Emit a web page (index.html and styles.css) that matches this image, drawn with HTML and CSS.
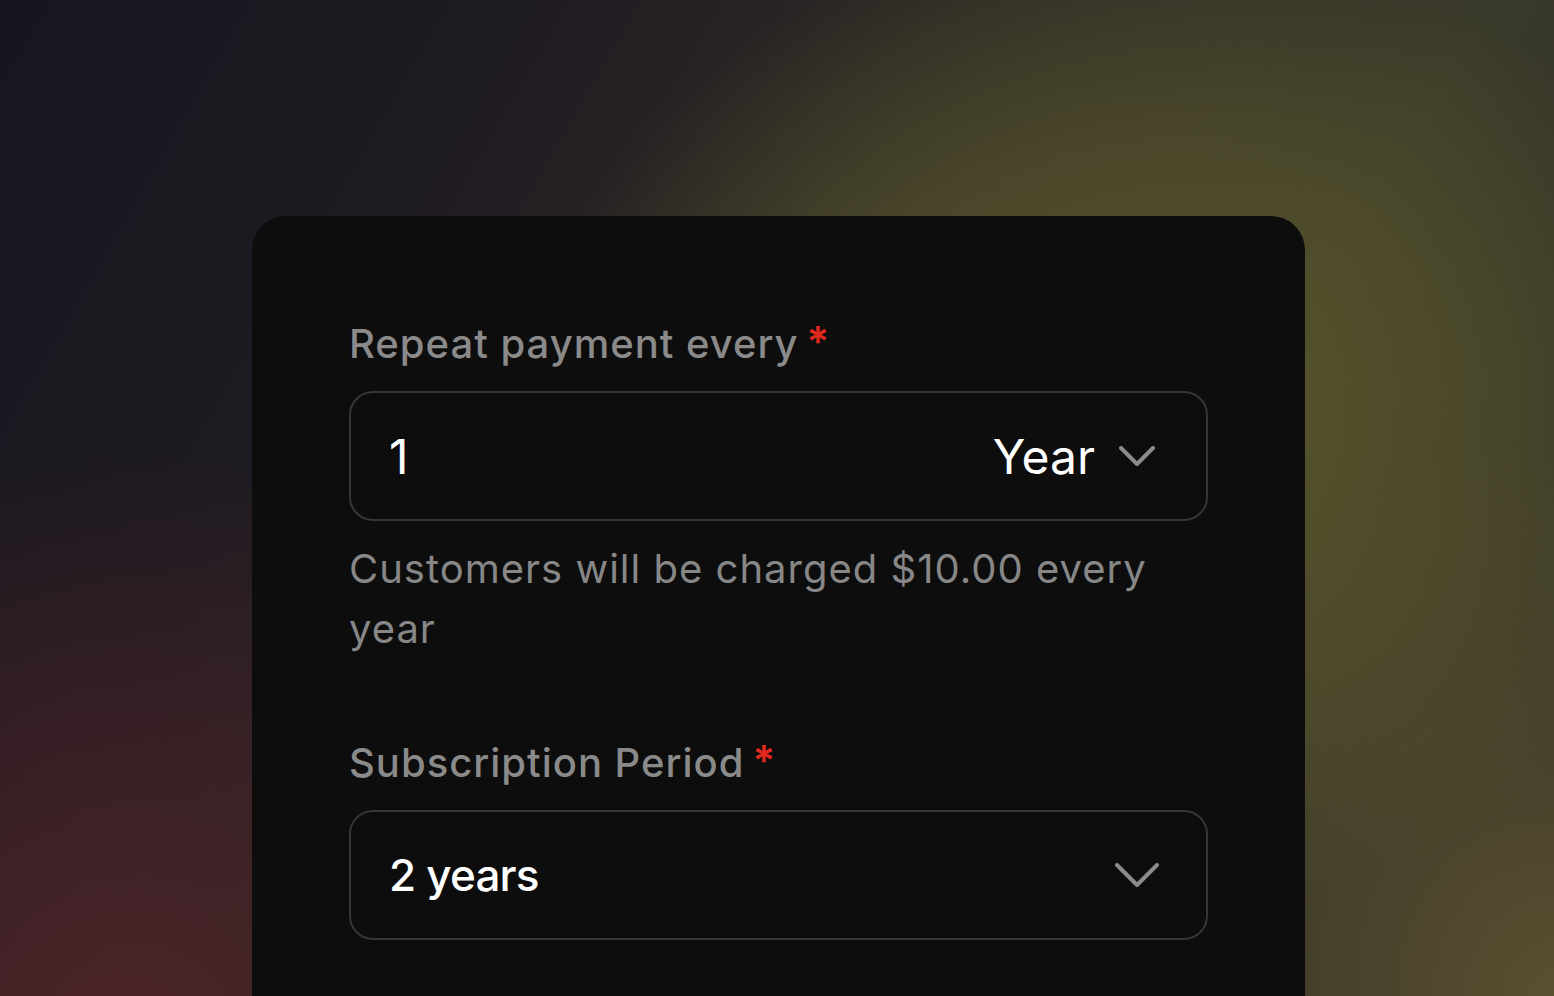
FILE: index.html
```html
<!DOCTYPE html>
<html lang="en">
<head>
<meta charset="utf-8">
<title>Subscription form</title>
<link rel="stylesheet" href="styles.css">
</head>
<body>
<main class="card">
  <section class="field">
    <div class="label">Repeat payment every<span class="req">*</span></div>
    <div class="input">
      <span class="value">1</span>
      <span class="unit">Year
        <svg class="chev chev-sm" viewBox="0 0 36 20" width="36" height="20"><path d="M2 2 L18 18 L34 2" fill="none" stroke="#8b8b8b" stroke-width="4" stroke-linecap="round" stroke-linejoin="round"/></svg>
      </span>
    </div>
    <p class="help">Customers will be charged $10.00 every year</p>
  </section>
  <section class="field field-second">
    <div class="label">Subscription Period<span class="req">*</span></div>
    <div class="input">
      <span class="value strong">2 years</span>
      <svg class="chev chev-lg" viewBox="0 0 44 24" width="44" height="24"><path d="M2 2 L22 22 L42 2" fill="none" stroke="#8b8b8b" stroke-width="4" stroke-linecap="round" stroke-linejoin="round"/></svg>
    </div>
  </section>
</main>
</body>
</html>
```

FILE: styles.css
```css
* { box-sizing: border-box; }
html, body { margin: 0; height: 100%; }
body {
  width: 1554px;
  height: 996px;
  overflow: hidden;
  font-family: "Inter", "Noto Sans", sans-serif;
  padding: 216px 0 0 252px;
  background:
    radial-gradient(ellipse 760px 620px at 1130px 420px, rgba(92,88,44,0.95) 0%, rgba(92,88,44,0.55) 45%, rgba(92,88,44,0) 80%),
    radial-gradient(ellipse 700px 700px at 120px 1050px, rgba(76,36,40,1) 0%, rgba(70,34,38,0.6) 45%, rgba(70,34,38,0) 85%),
    radial-gradient(ellipse 600px 700px at 1554px 1000px, rgba(90,80,48,1) 0%, rgba(90,80,48,0) 80%),
    linear-gradient(120deg, #17151f 0%, #1f1b22 25%, #2d2a26 45%, #3a3a2a 70%, #2d2c26 100%);
}
.card {
  width: 1053px;
  min-height: 900px;
  background: #0d0d0d;
  border-radius: 34px 34px 0 0;
  padding: 96px 97px 0 97px;
}
.field { display: flex; flex-direction: column; }
.field-second { margin-top: 72px; }
.label {
  font-size: 40px;
  line-height: 60px;
  font-weight: 500;
  color: #8a8a8a;
  letter-spacing: 1px;
}
.req {
  color: #e1291f;
  font-weight: 600;
  font-size: 42px;
  margin-left: 8px;
  vertical-align: 1px;
}
.input {
  margin-top: 17px;
  height: 130px;
  border: 2px solid #363636;
  border-radius: 24px;
  display: flex;
  align-items: center;
  justify-content: space-between;
  padding: 0 51px 0 38px;
  color: #ffffff;
  font-size: 48px;
}
.value { font-weight: 400; }
.value.strong { font-weight: 500; font-size: 44px; letter-spacing: -0.8px; }
.unit {
  display: flex;
  align-items: center;
  gap: 24px;
  font-weight: 400;
}
.chev { display: block; }
.chev-lg { margin-right: -4px; }
.help {
  margin: 18px 0 0 0;
  font-size: 40px;
  line-height: 60px;
  color: #878787;
  letter-spacing: 1px;
}
```
